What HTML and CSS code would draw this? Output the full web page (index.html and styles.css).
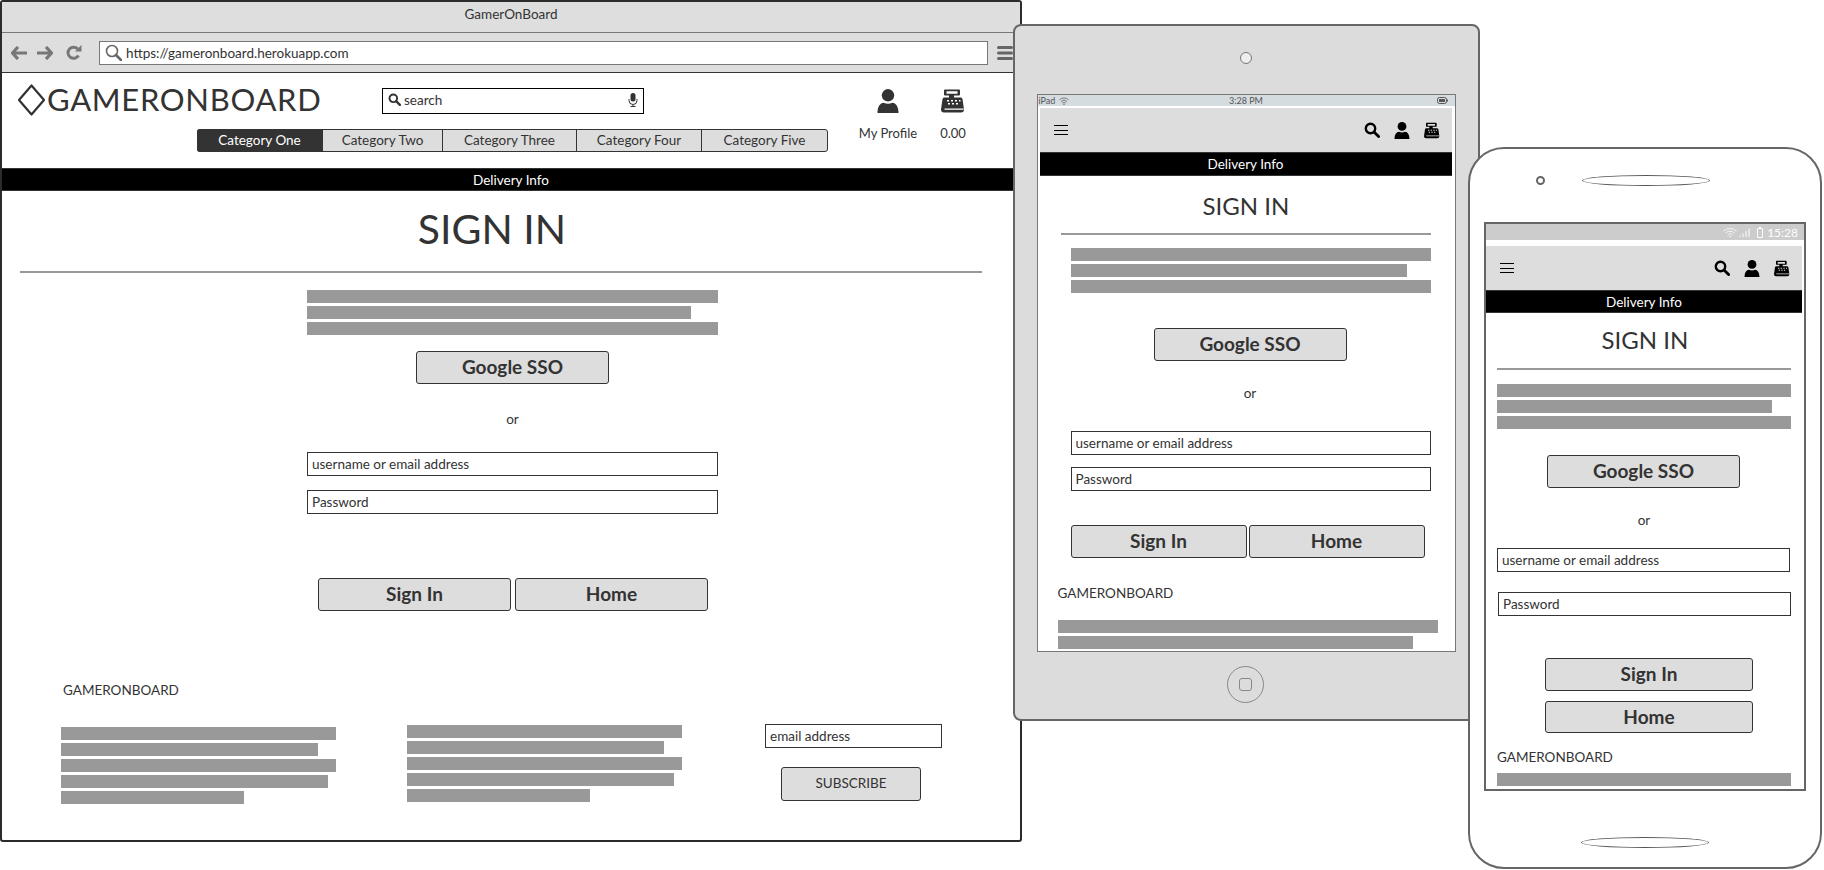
FILE: index.html
```html
<!DOCTYPE html>
<html lang="en">

<head>
    <meta charset="UTF-8">
    <meta name="viewport" content="width=device-width, initial-scale=1.0">
    <title>GamerOnBoard - Sign In wireframe</title>
    <link rel="stylesheet" href="styles.css">
</head>

<body>
    <!-- shared icons -->
    <svg class="icon-defs" aria-hidden="true">
        <symbol id="i-search" viewBox="0 0 16 16">
            <circle cx="6.5" cy="6.5" r="4.7" fill="none" stroke="currentColor" stroke-width="2.4" />
            <path d="M10 10l4.6 4.6" fill="none" stroke="currentColor" stroke-width="2.8" stroke-linecap="round" />
        </symbol>
        <symbol id="i-person" viewBox="0 0 22 24">
            <circle cx="11" cy="6.3" r="6.2" fill="currentColor" />
            <path d="M.5 24c0-6.5 2.6-9.8 6.2-10.2 2.8 1.3 5.8 1.3 8.6 0 3.6.4 6.2 3.7 6.2 10.2z" fill="currentColor" />
        </symbol>
        <symbol id="i-register" viewBox="0 0 24 24">
            <path fill-rule="evenodd" d="M4 .5h14a1 1 0 0 1 1 1v4a1 1 0 0 1-1 1h-5v2h6.500c1 0 1.700.6 2 1.500l1.500 10.500a3 3 0 0 1-3 3h-17a3 3 0 0 1-3-3l1.500-10.500c.3-.9 1-1.500 2-1.500h4.500v-2h-4a1 1 0 0 1-1-1v-4a1 1 0 0 1 1-1zm1.500 1.800v2.400h11v-2.400zM6 11h2v1.500h-2zm4 0h2v1.500h-2zm4 0h2v1.500h-2zm4 0h1.500v1.500h-1.500zm-11 3h2v1.500h-2zm4 0h2v1.500h-2zm4 0h2v1.500h-2zm-11.500 5.500v1.300h19v-1.300z" fill="currentColor" />
        </symbol>
    </svg>

    <!-- desktop browser -->
    <section class="browser">
        <div class="browser-title">GamerOnBoard</div>
        <div class="browser-bar">
            <svg class="tool-icon" viewBox="0 0 16 14"><path d="M7 1L1.500 7 7 13M2 7h14" fill="none" stroke="currentColor" stroke-width="3.200" /></svg>
            <svg class="tool-icon" viewBox="0 0 16 14"><path d="M9 1l5.500 6L9 13M14 7H0" fill="none" stroke="currentColor" stroke-width="3.200" /></svg>
            <svg class="tool-icon tool-reload" viewBox="0 0 16 16"><path d="M12.500 10.500A5.600 5.600 0 1 1 11.800 4" fill="none" stroke="currentColor" stroke-width="3" /><path d="M9 6.500h6.500V0z" fill="currentColor" /></svg>
            <div class="address">
                <svg class="address-icon" viewBox="0 0 17 17"><circle cx="7" cy="7" r="5.500" fill="none" stroke="currentColor" stroke-width="1.600" /><path d="M11 11l5 5" stroke="currentColor" stroke-width="2.600" stroke-linecap="round" /></svg>
                <span>https://gameronboard.herokuapp.com</span>
            </div>
            <svg class="tool-menu" viewBox="0 0 16 16"><path d="M1.500 2.500h13M1.500 8h13M1.500 13.500h13" stroke="currentColor" stroke-width="3" stroke-linecap="round" /></svg>
        </div>

        <header class="site-header">
            <div class="site-header-main">
                <div class="brand-row">
                    <svg class="brand-mark" viewBox="0 0 27 32"><path d="M13.500 1.500L26 16 13.500 30.500 1 16z" fill="none" stroke="#333" stroke-width="2.200" stroke-linejoin="round" /></svg>
                    <span class="brand-name">GAMERONBOARD</span>
                    <div class="site-search">
                        <svg class="site-search-icon"><use href="#i-search" /></svg>
                        <span>search</span>
                        <svg class="site-search-mic" viewBox="0 0 10 14"><rect x="2.500" y="0" width="5" height="8.500" rx="2.500" fill="currentColor" /><path d="M1 6v1.500a4 4 0 0 0 8 0V6M5 11.500V14M2.500 13.500h5" fill="none" stroke="currentColor" stroke-width="1" /></svg>
                    </div>
                </div>
                <nav class="tabs">
                    <a class="tab tab-active tab-one">Category One</a>
                    <a class="tab tab-two">Category Two</a>
                    <a class="tab tab-three">Category Three</a>
                    <a class="tab tab-four">Category Four</a>
                    <a class="tab tab-five">Category Five</a>
                </nav>
            </div>
            <div class="account">
                <div class="account-item account-profile">
                    <svg class="account-icon account-icon-person"><use href="#i-person" /></svg>
                    <span>My Profile</span>
                </div>
                <div class="account-item account-cart">
                    <svg class="account-icon"><use href="#i-register" /></svg>
                    <span>0.00</span>
                </div>
            </div>
        </header>

        <div class="delivery">Delivery Info</div>

        <main class="desktop-main">
            <h1 class="page-title">SIGN IN</h1>
            <hr class="rule">
            <div class="form-col">
                <div class="bars">
                    <div class="bar"></div>
                    <div class="bar bar-mid"></div>
                    <div class="bar"></div>
                </div>
                <a class="btn btn-sso">Google SSO</a>
                <p class="or">or</p>
                <div class="field field-user">username or email address</div>
                <div class="field field-pass">Password</div>
                <div class="btn-row">
                    <a class="btn">Sign In</a>
                    <a class="btn">Home</a>
                </div>
            </div>
            <p class="footer-brand">GAMERONBOARD</p>
            <div class="footer-cols">
                <div class="bars footer-col footer-col-a">
                    <div class="bar"></div>
                    <div class="bar bar-mid"></div>
                    <div class="bar"></div>
                    <div class="bar bar-long"></div>
                    <div class="bar bar-short"></div>
                </div>
                <div class="bars footer-col footer-col-b">
                    <div class="bar"></div>
                    <div class="bar bar-mid"></div>
                    <div class="bar"></div>
                    <div class="bar bar-long"></div>
                    <div class="bar bar-short"></div>
                </div>
                <div class="subscribe">
                    <div class="field">email address</div>
                    <a class="btn btn-subscribe">SUBSCRIBE</a>
                </div>
            </div>
        </main>
    </section>

    <!-- tablet -->
    <section class="tablet">
        <div class="tablet-camera"></div>
        <div class="tablet-screen">
            <div class="tablet-status">
                <span class="tablet-carrier">iPad</span>
                <svg class="tablet-wifi" viewBox="0 0 10 8"><path d="M.5 2.800a6.500 6.500 0 0 1 9 0M2 4.500a4.300 4.300 0 0 1 6 0M3.500 6a2 2 0 0 1 3 0" fill="none" stroke="currentColor" stroke-width=".7" /><circle cx="5" cy="7.300" r=".7" fill="currentColor" /></svg>
                <span class="tablet-time">3:28 PM</span>
                <svg class="tablet-battery" viewBox="0 0 11 7"><rect x=".5" y=".5" width="9" height="6" rx="2" fill="none" stroke="currentColor" /><rect x="2" y="2" width="6" height="3" fill="currentColor" /><path d="M10 2.500h1v2h-1z" fill="currentColor" /></svg>
            </div>
            <div class="mobile-nav">
                <svg class="burger" viewBox="0 0 14 12"><path d="M0 1.500h14M0 6.500h14M0 10.500h14" stroke="currentColor" stroke-width="1" shape-rendering="crispEdges" /></svg>
                <div class="mobile-nav-icons">
                    <svg class="nav-search"><use href="#i-search" /></svg>
                    <svg class="nav-person"><use href="#i-person" /></svg>
                    <svg class="nav-register"><use href="#i-register" /></svg>
                </div>
            </div>
            <div class="delivery delivery-small">Delivery Info</div>
            <h2 class="small-title">SIGN IN</h2>
            <hr class="rule">
            <div class="bars intro">
                <div class="bar"></div>
                <div class="bar bar-mid"></div>
                <div class="bar"></div>
            </div>
            <a class="btn btn-sso">Google SSO</a>
            <p class="or">or</p>
            <div class="field field-user">username or email address</div>
            <div class="field field-pass">Password</div>
            <div class="btn-row">
                <a class="btn">Sign In</a>
                <a class="btn">Home</a>
            </div>
            <p class="footer-brand">GAMERONBOARD</p>
            <div class="bars footer-bars">
                <div class="bar"></div>
                <div class="bar bar-mid"></div>
            </div>
        </div>
        <div class="tablet-home"><span class="tablet-home-key"></span></div>
    </section>

    <!-- phone -->
    <section class="phone">
        <div class="phone-top">
            <div class="phone-camera"></div>
            <div class="phone-speaker"></div>
        </div>
        <div class="phone-screen">
            <div class="phone-status">
                <svg class="phone-wifi" viewBox="0 0 14 9"><path d="M.5 3.300a9 9 0 0 1 13 0M2.500 5.200a6 6 0 0 1 9 0M4.500 7a3 3 0 0 1 5 0" fill="none" stroke="currentColor" stroke-width=".8" /><circle cx="7" cy="8.200" r=".8" fill="currentColor" /></svg>
                <svg class="phone-signal" viewBox="0 0 12 9"><path d="M1 9V7.500M4 9V5.500M7 9V3M10 9V.5" stroke="currentColor" stroke-width="1" /></svg>
                <svg class="phone-battery" viewBox="0 0 6 11"><rect x=".5" y="1.500" width="5" height="9" rx=".5" fill="none" stroke="currentColor" /><path d="M2 0h2v1.500H2z" fill="currentColor" /></svg>
                <span class="phone-time">15:28</span>
            </div>
            <div class="mobile-nav">
                <svg class="burger" viewBox="0 0 14 12"><path d="M0 1.500h14M0 6.500h14M0 10.500h14" stroke="currentColor" stroke-width="1" shape-rendering="crispEdges" /></svg>
                <div class="mobile-nav-icons">
                    <svg class="nav-search"><use href="#i-search" /></svg>
                    <svg class="nav-person"><use href="#i-person" /></svg>
                    <svg class="nav-register"><use href="#i-register" /></svg>
                </div>
            </div>
            <div class="delivery delivery-small">Delivery Info</div>
            <h2 class="small-title">SIGN IN</h2>
            <hr class="rule">
            <div class="bars intro">
                <div class="bar"></div>
                <div class="bar bar-mid"></div>
                <div class="bar"></div>
            </div>
            <a class="btn btn-sso">Google SSO</a>
            <p class="or">or</p>
            <div class="field field-user">username or email address</div>
            <div class="field field-pass">Password</div>
            <a class="btn btn-wide btn-signin">Sign In</a>
            <a class="btn btn-wide btn-home">Home</a>
            <p class="footer-brand">GAMERONBOARD</p>
            <div class="bars footer-bars">
                <div class="bar"></div>
            </div>
        </div>
        <div class="phone-speaker phone-speaker-bottom"></div>
    </section>
</body>

</html>
```

FILE: styles.css
```css
* {
    box-sizing: border-box;
}

body {
    position: relative;
    width: 1824px;
    height: 870px;
    margin: 0;
    overflow: hidden;
    background-color: #fff;
    color: #333;
    font-family: 'Lato', 'Noto Sans', sans-serif;
    font-size: 14px;
}

p,
h1,
h2 {
    margin: 0;
    font-weight: normal;
}

.icon-defs {
    position: absolute;
    width: 0;
    height: 0;
}

/* shared parts */

.bars {
    display: flex;
    flex-direction: column;
    gap: 3px;
}

.bar {
    width: 100%;
    height: 13px;
    flex: none;
    background-color: #999;
}

.bar-mid {
    width: 93.5%;
}

.bar-long {
    width: 97%;
}

.bar-short {
    width: 66.5%;
}

.btn {
    display: flex;
    align-items: center;
    justify-content: center;
    width: 193px;
    height: 33px;
    padding-bottom: 2px;
    background-color: #ddd;
    border: 1px solid #333;
    border-radius: 3px;
    color: #333;
    font-size: 19px;
    font-weight: bold;
}

.field {
    display: flex;
    align-items: center;
    height: 24px;
    padding-left: 4px;
    padding-bottom: 1px;
    background-color: #fff;
    border: 1px solid #333;
    font-size: 13.500px;
}

.or {
    line-height: 20px;
    text-align: center;
    font-size: 13.500px;
}

.rule {
    height: 2px;
    margin-top: 0;
    margin-bottom: 0;
    background-color: #999;
    border: none;
}

.footer-brand {
    line-height: 16px;
    font-size: 13.500px;
}

.delivery {
    display: flex;
    align-items: center;
    justify-content: center;
    height: 23px;
    background-color: #000;
    border-top: 1px solid #333;
    border-bottom: 1px solid #333;
    color: #fff;
    font-size: 13.500px;
}

/* desktop browser */

.browser {
    position: absolute;
    left: 0;
    top: 0;
    width: 1022px;
    height: 842px;
    background-color: #fff;
    border: 2px solid #2b2b2b;
    border-radius: 3px;
}

.browser-title {
    height: 31px;
    line-height: 24px;
    text-align: center;
    background-color: #dedede;
    border-bottom: 1px solid #777;
    font-size: 13.500px;
}

.browser-bar {
    display: flex;
    align-items: center;
    height: 40px;
    padding-left: 9px;
    background-color: #dedede;
    border-bottom: 1px solid #333;
}

.tool-icon {
    width: 16px;
    height: 14px;
    margin-right: 10px;
    color: #777;
}

.tool-reload {
    height: 16px;
    margin-left: 3px;
    margin-right: 17px;
}

.address {
    display: flex;
    align-items: center;
    width: 889px;
    height: 24px;
    padding-left: 5px;
    background-color: #fff;
    border: 1px solid #777;
    font-size: 13.500px;
}

.address-icon {
    width: 17px;
    height: 17px;
    margin-right: 4px;
    color: #666;
}

.tool-menu {
    width: 16px;
    height: 16px;
    margin-left: 9px;
    color: #666;
}

.site-header {
    display: flex;
    height: 95px;
}

.site-header-main {
    width: 851px;
}

.brand-row {
    display: flex;
    align-items: center;
    height: 41px;
    padding-left: 16px;
    padding-top: 13px;
}

.brand-mark {
    width: 27px;
    height: 32px;
    flex: none;
}

.brand-name {
    width: 335px;
    margin-left: 2px;
    margin-top: -3px;
    font-size: 31px;
    letter-spacing: 0.700px;
}

.site-search {
    display: flex;
    align-items: center;
    width: 262px;
    height: 26px;
    padding: 0 6px 2px 5px;
    border: 1px solid #000;
    margin-top: 1px;
    font-size: 13.500px;
}

.site-search-icon {
    width: 13px;
    height: 13px;
    margin-right: 3px;
}

.site-search-mic {
    width: 10px;
    height: 14px;
    margin-left: auto;
    margin-right: -1px;
}

.tabs {
    display: flex;
    width: 631px;
    height: 23px;
    margin-top: 15px;
    margin-left: 195px;
    background-color: #ddd;
    border: 1px solid #333;
    border-radius: 3px;
    font-size: 13.500px;
    line-height: 21px;
    text-align: center;
}

.tab {
    border-right: 1px solid #333;
}

.tab-active {
    margin: -1px 0 -1px -1px;
    border-radius: 3px 0 0 3px;
    background-color: #333;
    color: #fff;
    line-height: 23px;
}

.tab-one {
    width: 126px;
}

.tab-two {
    width: 120px;
}

.tab-three {
    width: 134px;
}

.tab-four {
    width: 125px;
}

.tab-five {
    flex: 1;
    border-right: none;
}

.account {
    display: flex;
    gap: 5px;
    padding-top: 16px;
}

.account-item {
    display: flex;
    flex-direction: column;
    align-items: center;
    width: 70px;
    font-size: 13px;
}

.account-cart {
    width: 50px;
}

.account-icon {
    width: 24px;
    height: 24px;
    margin-bottom: 12px;
}

.account-icon-person {
    width: 22px;
}

.desktop-main .page-title {
    margin: 13px 38px 17px 0;
    font-size: 41px;
    line-height: 50px;
    text-align: center;
}

.desktop-main .rule {
    margin-left: 18px;
    margin-right: 38px;
}

.form-col {
    width: 411px;
    margin-left: 305px;
    padding-top: 17px;
}

.form-col .btn-sso {
    margin-top: 16px;
    margin-left: 109px;
}

.form-col .or {
    margin-top: 25px;
}

.form-col .field-user {
    margin-top: 23px;
}

.form-col .field-pass {
    margin-top: 14px;
}

.form-col .btn-row {
    display: flex;
    gap: 4px;
    margin-top: 64px;
    margin-left: 11px;
}

.desktop-main .footer-brand {
    margin-top: 71px;
    margin-left: 61px;
}

.footer-cols {
    display: flex;
    align-items: flex-start;
    margin-top: 26px;
    margin-left: 59px;
}

.footer-col {
    width: 275px;
}

.footer-col-a {
    margin-top: 3px;
}

.footer-col-b {
    margin-top: 1px;
    margin-left: 71px;
}

.subscribe {
    width: 177px;
    margin-left: 83px;
}

.btn-subscribe {
    width: 140px;
    height: 34px;
    margin-top: 19px;
    margin-left: 16px;
    font-size: 13.500px;
    font-weight: normal;
}

/* tablet */

.tablet {
    position: absolute;
    left: 1013px;
    top: 24px;
    display: flex;
    flex-direction: column;
    align-items: center;
    width: 467px;
    height: 697px;
    background-color: #dcdcdc;
    border: 2px solid #666;
    border-radius: 8px;
}

.tablet-camera {
    width: 12px;
    height: 12px;
    margin-top: 26px;
    margin-right: 2px;
    border: 1px solid #777;
    border-radius: 50%;
    background-color: #eee;
}

.tablet-screen {
    width: 419px;
    height: 558px;
    margin-top: 30px;
    margin-right: 1px;
    overflow: hidden;
    background-color: #fff;
    border: 1px solid #777;
}

.tablet-status {
    position: relative;
    display: flex;
    align-items: center;
    height: 11px;
    padding: 0 7px 0 1px;
    background-color: #d5dce0;
    color: #555;
    font-size: 9px;
}

.tablet-wifi {
    width: 10px;
    height: 8px;
    margin-left: 4px;
}

.tablet-time {
    position: absolute;
    left: 0;
    right: 0;
    text-align: center;
}

.tablet-battery {
    width: 11px;
    height: 7px;
    margin-left: auto;
}

.mobile-nav {
    display: flex;
    align-items: center;
    justify-content: space-between;
    height: 44px;
    margin-top: 2px;
    margin-left: 2px;
    margin-right: 3px;
    padding: 0 12px 0 14px;
    background-color: #ddd;
    color: #000;
}

.burger {
    width: 14px;
    height: 12px;
}

.mobile-nav-icons {
    display: flex;
    align-items: center;
    gap: 14px;
}

.nav-search {
    width: 16px;
    height: 16px;
}

.nav-person {
    width: 16px;
    height: 17px;
}

.nav-register {
    width: 16px;
    height: 17px;
}

.delivery-small {
    margin-left: 2px;
    margin-right: 3px;
}

.tablet-screen .delivery-small {
    height: 24px;
}

.small-title {
    line-height: 30px;
    text-align: center;
    font-size: 24px;
}

.tablet-screen .small-title {
    margin-top: 15px;
}

.tablet-screen .rule {
    margin: 12px 24px 0 23px;
}

.tablet-screen .intro {
    margin: 13px 24px 0 33px;
}

.tablet-screen .btn-sso {
    margin-top: 35px;
    margin-left: 116px;
}

.tablet-screen .or {
    margin-top: 22px;
    margin-left: 8px;
}

.tablet-screen .field {
    width: 360px;
    margin-left: 33px;
}

.tablet-screen .field-user {
    margin-top: 28px;
}

.tablet-screen .field-pass {
    margin-top: 12px;
}

.tablet-screen .btn-row {
    display: flex;
    gap: 2px;
    margin-top: 34px;
    margin-left: 33px;
}

.tablet-screen .btn-row .btn {
    width: 176px;
}

.tablet-screen .footer-brand {
    margin-top: 27px;
    margin-left: 20px;
}

.tablet-screen .footer-bars {
    margin: 19px 17px 0 20px;
}

.tablet-home {
    display: flex;
    align-items: center;
    justify-content: center;
    width: 37px;
    height: 37px;
    margin-top: 14px;
    margin-right: 2px;
    border: 1px solid #888;
    border-radius: 50%;
}

.tablet-home-key {
    width: 13px;
    height: 13px;
    border: 1px solid #888;
    border-radius: 3px;
}

/* phone */

.phone {
    position: absolute;
    left: 1468px;
    top: 147px;
    display: flex;
    flex-direction: column;
    width: 354px;
    height: 722px;
    background-color: #fff;
    border: 2px solid #666;
    border-radius: 36px;
}

.phone-top {
    display: flex;
    align-items: center;
    gap: 37px;
    margin-top: 26px;
    padding-left: 66px;
}

.phone-camera {
    width: 9px;
    height: 9px;
    border: 2px solid #666;
    border-radius: 50%;
}

.phone-speaker {
    width: 128px;
    height: 11px;
    border: 1px solid #555;
    border-radius: 50%;
}

.phone-speaker-bottom {
    margin-top: 46px;
    margin-left: 111px;
}

.phone-screen {
    width: 322px;
    height: 569px;
    margin-top: 36px;
    margin-left: 14px;
    overflow: hidden;
    border: 2px solid #666;
}

.phone-status {
    display: flex;
    align-items: center;
    justify-content: flex-end;
    height: 16px;
    padding-right: 6px;
    background-color: #ccc;
    color: #fff;
    font-size: 12px;
}

.phone-wifi {
    width: 14px;
    height: 9px;
}

.phone-signal {
    width: 12px;
    height: 9px;
    margin-left: 2px;
}

.phone-battery {
    width: 6px;
    height: 11px;
    margin-left: 6px;
}

.phone-time {
    margin-left: 4px;
}

.phone-screen .mobile-nav {
    margin-top: 6px;
    margin-left: 0;
    margin-right: 2px;
}

.phone-screen .delivery-small {
    margin-left: 0;
    margin-right: 2px;
}

.phone-screen .small-title {
    margin-top: 12px;
}

.phone-screen .rule {
    margin: 13px 13px 0 11px;
}

.phone-screen .intro {
    margin: 14px 13px 0 11px;
}

.phone-screen .btn-sso {
    margin-top: 26px;
    margin-left: 61px;
}

.phone-screen .or {
    margin-top: 22px;
    margin-right: 2px;
}

.phone-screen .field {
    width: 293px;
    margin-left: 11px;
}

.phone-screen .field-user {
    margin-top: 18px;
}

.phone-screen .field-pass {
    margin-top: 20px;
    margin-left: 12px;
}

.btn-wide {
    width: 208px;
    margin-left: 59px;
}

.btn-signin {
    margin-top: 42px;
}

.btn-home {
    height: 32px;
    margin-top: 10px;
}

.phone-screen .footer-brand {
    margin-top: 16px;
    margin-left: 11px;
}

.phone-screen .footer-bars {
    margin: 8px 13px 0 11px;
}
```
